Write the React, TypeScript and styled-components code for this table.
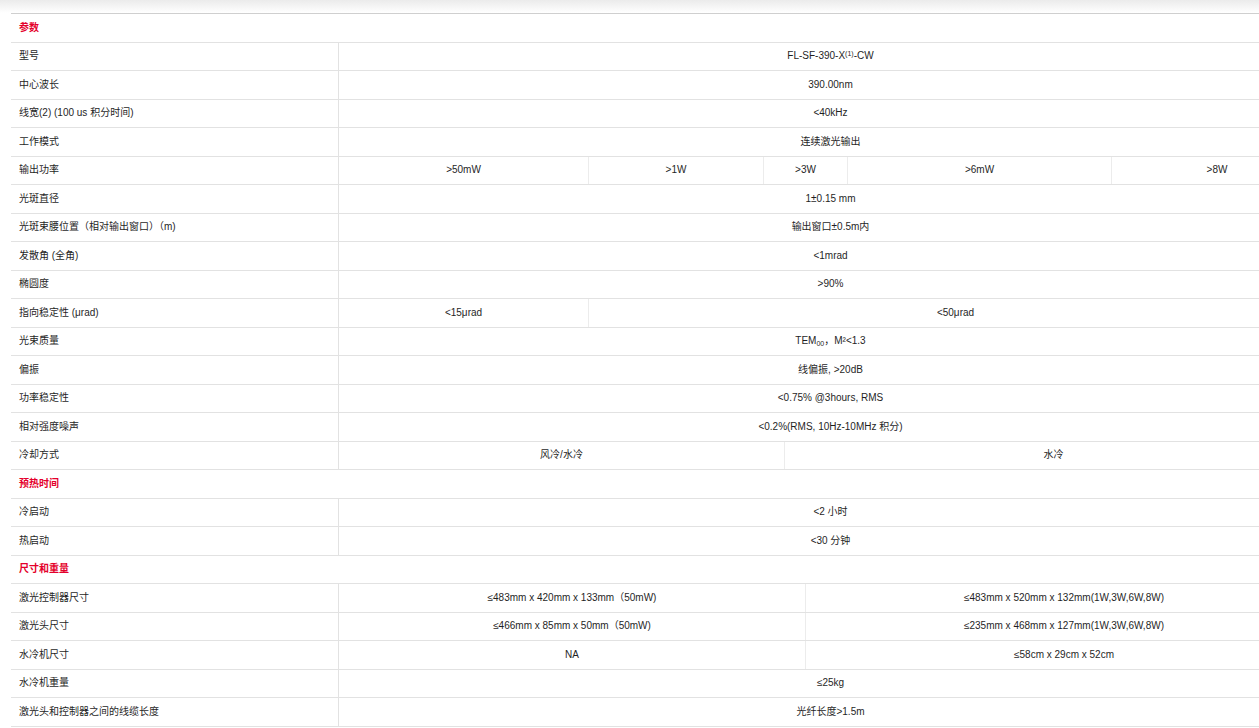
import React from 'react';
import styled, { createGlobalStyle } from 'styled-components';

const GlobalStyle = createGlobalStyle`
  html, body {
    margin: 0;
    padding: 0;
    background: #fff;
    overflow: hidden;
  }
  body {
    font-family: "Liberation Sans", "Noto Sans CJK SC", sans-serif;
    color: #1f1f1f;
  }
`;

const Page = styled.div`
  width: 1259px;
  overflow: hidden;
`;

const Shade = styled.div`
  height: 13px;
  background: linear-gradient(to bottom, #ebebeb 0%, #f7f7f7 60%, #ffffff 100%);
`;

const Table = styled.div`
  margin-left: 11px;
  width: 1311px;
  border-top: 1px solid #cfcfcf;
`;

const Row = styled.div`
  display: flex;
  height: 28.5px;
  box-sizing: border-box;
  border-bottom: 1px solid #e2e2e2;
`;

const Section = styled.div`
  display: flex;
  align-items: center;
  padding-left: 8px;
  font-size: 10px;
  line-height: 12px;
  font-weight: 700;
  color: #e4002b;
`;

const Label = styled.div`
  flex: 0 0 328px;
  box-sizing: border-box;
  display: flex;
  align-items: center;
  padding-left: 8px;
  font-size: 10px;
  line-height: 12px;
  border-right: 1px solid #e2e2e2;
  white-space: nowrap;
`;

const Values = styled.div`
  flex: 1;
  display: flex;
`;

const Cell = styled.div<{ $w?: number }>`
  flex: ${(p) => (p.$w ? `0 0 ${p.$w}px` : '1 1 0')};
  box-sizing: border-box;
  display: flex;
  align-items: center;
  justify-content: center;
  font-size: 10px;
  white-space: nowrap;
  border-right: 1px solid #ececec;
  &:last-child {
    border-right: none;
  }
`;

const Text = styled.span`
  line-height: 12px;
  sup {
    font-size: 7px;
    vertical-align: 3px;
    line-height: 0;
  }
  sub {
    font-size: 7px;
    vertical-align: -2px;
    line-height: 0;
  }
`;

type Item =
  | { section: string }
  | { label: string; cells: { text: React.ReactNode; w?: number }[] };

const one = (text: React.ReactNode) => [{ text }];

const data: Item[] = [
  { section: '参数' },
  { label: '型号', cells: one(<>FL-SF-390-X<sup>(1)</sup>-CW</>) },
  { label: '中心波长', cells: one('390.00nm') },
  { label: '线宽(2) (100 us 积分时间)', cells: one('<40kHz') },
  { label: '工作模式', cells: one('连续激光输出') },
  {
    label: '输出功率',
    cells: [
      { text: '>50mW', w: 250 },
      { text: '>1W', w: 175 },
      { text: '>3W', w: 84 },
      { text: '>6mW', w: 264 },
      { text: '>8W' },
    ],
  },
  { label: '光斑直径', cells: one('1±0.15 mm') },
  { label: '光斑束腰位置（相对输出窗口）（m)', cells: one('输出窗口±0.5m内') },
  { label: '发散角 (全角)', cells: one('<1mrad') },
  { label: '椭圆度', cells: one('>90%') },
  {
    label: '指向稳定性 (μrad)',
    cells: [{ text: '<15μrad', w: 250 }, { text: '<50μrad' }],
  },
  { label: '光束质量', cells: one(<>TEM<sub>00</sub>，M²&lt;1.3</>) },
  { label: '偏振', cells: one('线偏振, >20dB') },
  { label: '功率稳定性', cells: one('<0.75% @3hours, RMS') },
  { label: '相对强度噪声', cells: one('<0.2%(RMS, 10Hz-10MHz 积分)') },
  {
    label: '冷却方式',
    cells: [{ text: '风冷/水冷', w: 446 }, { text: '水冷' }],
  },
  { section: '预热时间' },
  { label: '冷启动', cells: one('<2 小时') },
  { label: '热启动', cells: one('<30 分钟') },
  { section: '尺寸和重量' },
  {
    label: '激光控制器尺寸',
    cells: [
      { text: '≤483mm x 420mm x 133mm（50mW)', w: 467 },
      { text: '≤483mm x 520mm x 132mm(1W,3W,6W,8W)' },
    ],
  },
  {
    label: '激光头尺寸',
    cells: [
      { text: '≤466mm x 85mm x 50mm（50mW)', w: 467 },
      { text: '≤235mm x 468mm x 127mm(1W,3W,6W,8W)' },
    ],
  },
  {
    label: '水冷机尺寸',
    cells: [{ text: 'NA', w: 467 }, { text: '≤58cm x 29cm x 52cm' }],
  },
  { label: '水冷机重量', cells: one('≤25kg') },
  { label: '激光头和控制器之间的线缆长度', cells: one('光纤长度>1.5m') },
];

export default function App() {
  return (
    <>
      <GlobalStyle />
      <Page>
        <Shade />
        <Table>
          {data.map((item, i) =>
            'section' in item ? (
              <Row key={i}>
                <Section>{item.section}</Section>
              </Row>
            ) : (
              <Row key={i}>
                <Label>{item.label}</Label>
                <Values>
                  {item.cells.map((c, j) => (
                    <Cell key={j} $w={c.w}>
                      <Text>{c.text}</Text>
                    </Cell>
                  ))}
                </Values>
              </Row>
            )
          )}
        </Table>
      </Page>
    </>
  );
}
